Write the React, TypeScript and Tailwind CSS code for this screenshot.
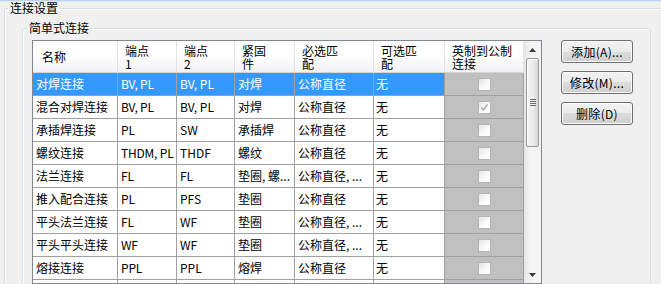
import React from "react";

type Row = {
  name: string;
  end1: string;
  end2: string;
  fastener: string;
  required: string;
  optional: string;
  checked: boolean;
};

const rows: Row[] = [
  { name: "对焊连接", end1: "BV, PL", end2: "BV, PL", fastener: "对焊", required: "公称直径", optional: "无", checked: false },
  { name: "混合对焊连接", end1: "BV, PL", end2: "BV, PL", fastener: "对焊", required: "公称直径", optional: "无", checked: true },
  { name: "承插焊连接", end1: "PL", end2: "SW", fastener: "承插焊", required: "公称直径", optional: "无", checked: false },
  { name: "螺纹连接", end1: "THDM, PL", end2: "THDF", fastener: "螺纹", required: "公称直径", optional: "无", checked: false },
  { name: "法兰连接", end1: "FL", end2: "FL", fastener: "垫圈, 螺...", required: "公称直径, ...", optional: "无", checked: false },
  { name: "推入配合连接", end1: "PL", end2: "PFS", fastener: "垫圈", required: "公称直径", optional: "无", checked: false },
  { name: "平头法兰连接", end1: "FL", end2: "WF", fastener: "垫圈", required: "公称直径, ...", optional: "无", checked: false },
  { name: "平头平头连接", end1: "WF", end2: "WF", fastener: "垫圈", required: "公称直径, ...", optional: "无", checked: false },
  { name: "熔接连接", end1: "PPL", end2: "PPL", fastener: "熔焊", required: "公称直径", optional: "无", checked: false },
  { name: "", end1: "", end2: "", fastener: "", required: "", optional: "", checked: false },
];

const font = "font-['Noto_Sans_CJK_SC',sans-serif] text-[12px] leading-[12px]";

function CheckBox({ checked }: { checked: boolean }) {
  return (
    <div className="flex h-[13px] w-[13px] items-center justify-center border border-[#b4b4b4] bg-[linear-gradient(135deg,#e4e4e4_0%,#fbfbfb_60%,#ffffff_100%)]">
      {checked && (
        <svg width="9" height="9" viewBox="0 0 9 9">
          <path d="M1.5 4.5 L3.5 6.8 L7.5 1.5" fill="none" stroke="#a6a6a6" strokeWidth="1.4" />
        </svg>
      )}
    </div>
  );
}

function Cell({ className, children }: { className: string; children?: React.ReactNode }) {
  return (
    <div className={`flex h-full items-center overflow-hidden whitespace-nowrap border-r border-[#a0a0a0] ${className}`}>
      {children}
    </div>
  );
}

function HeaderCell({ className, children }: { className: string; children: React.ReactNode }) {
  return (
    <div className={`flex h-full flex-col justify-center border-r border-[#e3e3e3] leading-[13px] ${className}`}>
      {children}
    </div>
  );
}

function Scrollbar() {
  return (
    <div className="flex h-full w-[17px] flex-col bg-[linear-gradient(to_right,#e6e6e6_0%,#f4f4f4_40%,#f4f4f4_100%)]">
      <div className="flex h-[17px] items-center justify-center">
        <svg width="7" height="4" viewBox="0 0 7 4">
          <path d="M3.5 0 L7 4 L0 4 Z" fill="#3c3c3c" />
        </svg>
      </div>
      <div className="mx-[2px] flex h-[89px] items-center justify-center rounded-[2px] border border-[#989898] bg-[linear-gradient(to_right,#f5f5f5_0%,#ececec_50%,#d9d9d9_100%)] shadow-[inset_1px_1px_0_#ffffff]">
        <div className="flex flex-col gap-[1px]">
          <div className="h-[1px] w-[6px] bg-[#6f6f6f]" />
          <div className="h-[1px] w-[6px] bg-[#6f6f6f]" />
          <div className="h-[1px] w-[6px] bg-[#6f6f6f]" />
          <div className="h-[1px] w-[6px] bg-[#6f6f6f]" />
        </div>
      </div>
      <div className="flex-1" />
      <div className="flex h-[17px] items-center justify-center">
        <svg width="7" height="4" viewBox="0 0 7 4">
          <path d="M0 0 L7 0 L3.5 4 Z" fill="#3c3c3c" />
        </svg>
      </div>
    </div>
  );
}

function Button({ label }: { label: string }) {
  return (
    <button className="flex h-[23px] w-[72px] items-center justify-center rounded-[3px] border border-[#707070] bg-[linear-gradient(to_bottom,#f2f2f2_0%,#ebebeb_50%,#dddddd_50%,#cfcfcf_100%)] text-black tracking-[0.3px] shadow-[inset_0_0_0_1px_#fbfbfb]">
      {label}
    </button>
  );
}

export default function App() {
  return (
    <div className={`h-[284px] w-[661px] overflow-hidden bg-[#f0f0f0] text-black ${font}`}>
      <div className="h-[1px] bg-[#bcd2ea]" />
      <div className="h-[1px] bg-[#e3ecf6]" />

      <fieldset className="ml-[4px] h-[300px] w-[680px] rounded-[3px] border border-[#d5dfe5] shadow-[inset_1px_1px_0_#ffffff]">
        <legend className="ml-[3px] px-[2px] leading-[12px]">连接设置</legend>

        <fieldset className="ml-[17px] mt-[8px] h-[280px] w-[629px] rounded-[3px] border border-[#d5dfe5] shadow-[inset_1px_1px_0_#ffffff]">
          <legend className="ml-[4px] px-[2px] leading-[12px]">简单式连接</legend>

          <div className="flex items-start gap-[19px] pl-[9px] pt-[6px]">
            {/* list view */}
            <div className="flex h-[244px] w-[510px] overflow-hidden border border-[#828790] bg-white">
              <div className="flex w-[491px] flex-col">
                <div className="flex h-[32px] shrink-0 border-b border-[#d5d5d5] bg-[linear-gradient(to_bottom,#ffffff_0%,#ffffff_45%,#f1f2f4_100%)]">
                  <HeaderCell className="w-[85px] pl-[9px]">名称</HeaderCell>
                  <HeaderCell className="w-[59px] pl-[7px]">
                    <span>端点</span>
                    <span>1</span>
                  </HeaderCell>
                  <HeaderCell className="w-[58px] pl-[7px]">
                    <span>端点</span>
                    <span>2</span>
                  </HeaderCell>
                  <HeaderCell className="w-[60px] pl-[7px]">
                    <span>紧固</span>
                    <span>件</span>
                  </HeaderCell>
                  <HeaderCell className="w-[79px] pl-[7px]">
                    <span>必选匹</span>
                    <span>配</span>
                  </HeaderCell>
                  <HeaderCell className="w-[71px] pl-[7px]">
                    <span>可选匹</span>
                    <span>配</span>
                  </HeaderCell>
                  <HeaderCell className="w-[79px] pl-[7px]">
                    <span>英制到公制</span>
                    <span>连接</span>
                  </HeaderCell>
                </div>

                {rows.map((row, i) => {
                  const selected = i === 0;
                  return (
                    <div
                      key={i}
                      className={`flex h-[23px] shrink-0 border-b border-[#a0a0a0] ${selected ? "bg-[#3399ff] text-white" : "bg-white text-black"}`}
                    >
                      <Cell className="w-[85px] pl-[3px]">{row.name}</Cell>
                      <Cell className="w-[59px] pl-[3px] tracking-[-0.2px]">{row.end1}</Cell>
                      <Cell className="w-[58px] pl-[3px]">{row.end2}</Cell>
                      <Cell className="w-[60px] pl-[3px]">{row.fastener}</Cell>
                      <Cell className="w-[79px] pl-[3px]">{row.required}</Cell>
                      <Cell className="w-[71px] pl-[2px]">{row.optional}</Cell>
                      <Cell className="w-[79px] justify-center bg-[#c0c0c0]">
                        <CheckBox checked={row.checked} />
                      </Cell>
                    </div>
                  );
                })}
              </div>
              <Scrollbar />
            </div>

            {/* buttons */}
            <div className="flex flex-col gap-[8px]">
              <Button label="添加(A)..." />
              <Button label="修改(M)..." />
              <Button label="删除(D)" />
            </div>
          </div>
        </fieldset>
      </fieldset>
    </div>
  );
}
